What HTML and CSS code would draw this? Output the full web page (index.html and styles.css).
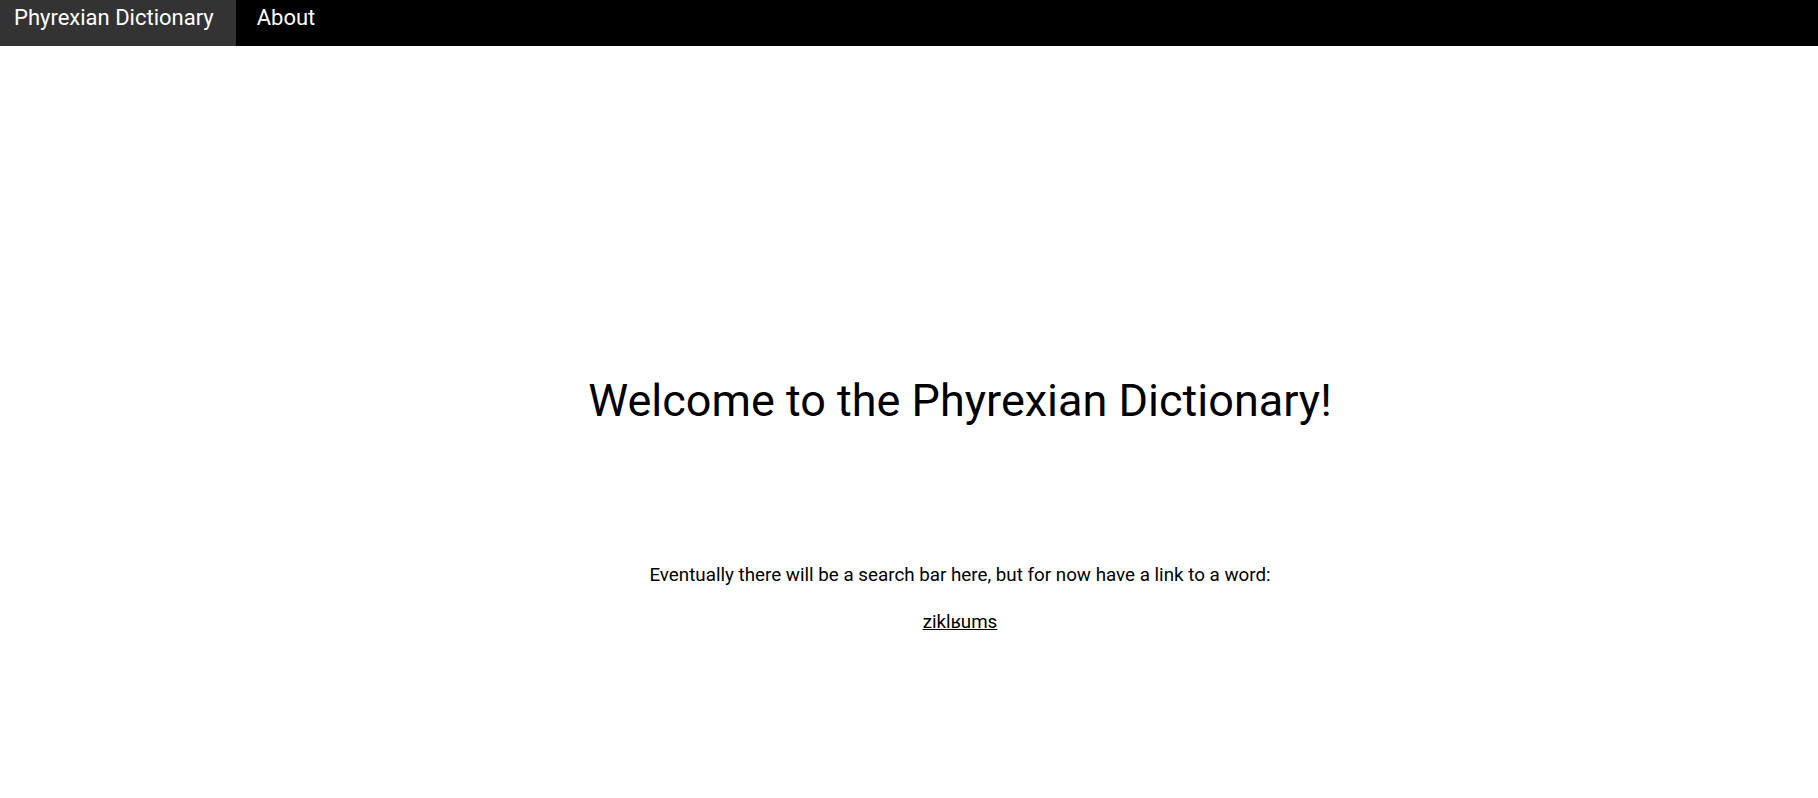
FILE: index.html
```html
<!DOCTYPE html>
<html lang="en">
<head>
<meta charset="utf-8">
<title>Phyrexian Dictionary</title>
<link rel="stylesheet" href="styles.css">
</head>
<body>
<nav class="topnav">
  <a class="nav-link active" href="#">Phyrexian Dictionary</a>
  <a class="nav-link" href="#">About</a>
</nav>
<main class="content">
  <h1 class="title">Welcome to the Phyrexian Dictionary!</h1>
  <p class="intro">Eventually there will be a search bar here, but for now have a link to a word:</p>
  <p class="word"><a href="#">ziklʁums</a></p>
</main>
</body>
</html>
```

FILE: styles.css
```css
html, body {
  margin: 0;
  padding: 0;
  background: #fff;
  font-family: Roboto, "Liberation Sans", sans-serif;
  color: #000;
}

.topnav {
  display: flex;
  background: #000;
  height: 46px;
}

.nav-link {
  display: block;
  padding: 5px 22px 0 14px;
  color: #fff;
  text-decoration: none;
  font-size: 22px;
  line-height: 1.172;
}

.nav-link.active {
  background: #333;
}

.nav-link + .nav-link {
  padding-left: 21px;
}

.content {
  display: flex;
  flex-direction: column;
  align-items: center;
  padding-top: 329px;
  padding-left: 102px;
}

.title {
  margin: 0;
  font-size: 45px;
  font-weight: 400;
  line-height: 1.172;
}

.intro {
  margin: 136px 0 0;
  font-size: 18.8px;
  line-height: 1.172;
}

.word {
  margin: 25px 0 0;
  font-size: 18.8px;
  line-height: 1.172;
}

.word a {
  color: #000;
}
```
